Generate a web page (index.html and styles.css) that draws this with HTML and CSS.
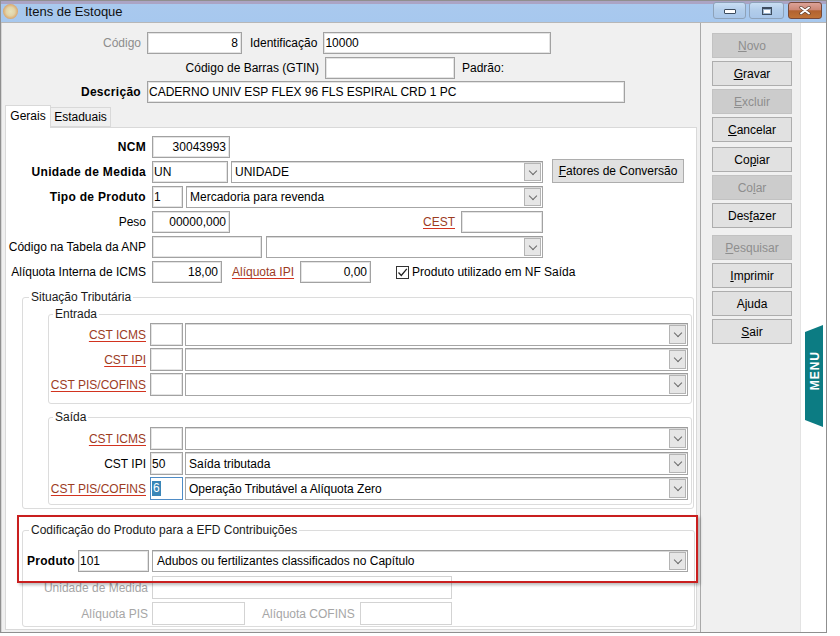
FILE: index.html
```html
<!DOCTYPE html>
<html lang="pt-BR">
<head>
<meta charset="utf-8">
<title>Itens de Estoque</title>
<link rel="stylesheet" href="styles.css">
</head>
<body>
<div class="window">
  <div class="titlebar">
    <span class="appicon"></span>
    <span class="title">Itens de Estoque</span>
    <div class="wbtns">
      <span class="wbtn wmin"><span class="gmin"></span></span>
      <span class="wbtn wmax"><span class="gmax"></span></span>
      <span class="wbtn wclose"><svg width="12" height="9" viewBox="0 0 12 9"><path d="M2 1.5 10 7.5M10 1.5 2 7.5" stroke="#5a3a2a" stroke-width="3.2" stroke-linecap="round"/><path d="M2 1.5 10 7.5M10 1.5 2 7.5" stroke="#fff" stroke-width="2" stroke-linecap="round"/></svg></span>
    </div>
  </div>
  <div class="client">
    <div class="main">
      <div class="toprow">
        <span class="lbl w138 r dis">Código</span>
        <div class="tb w95 r">8</div>
        <span class="lbl ml8">Identificação</span>
        <div class="tb w228">10000</div>
      </div>
      <div class="toprow row2">
        <span class="lbl w316 r">Código de Barras (GTIN)</span>
        <div class="tb w130"></div>
        <span class="lbl ml7">Padrão:</span>
      </div>
      <div class="toprow row3">
        <span class="lbl w138 r b">Descrição</span>
        <div class="tb w478">CADERNO UNIV ESP FLEX 96 FLS ESPIRAL CRD 1 PC</div>
      </div>
      <div class="tabs">
        <span class="tab active">Gerais</span>
        <span class="tab">Estaduais</span>
      </div>
      <div class="panel">
        <div class="frow">
          <span class="flabel b">NCM</span>
          <div class="tb w78 r">30043993</div>
        </div>
        <div class="frow">
          <span class="flabel b">Unidade de Medida</span>
          <div class="tb w76">UN</div>
          <div class="cb w312 ml3"><span class="cbtxt">UNIDADE</span><span class="cbbtn"></span></div>
          <div class="pbtn"><u>F</u>atores de Conversão</div>
        </div>
        <div class="frow">
          <span class="flabel b">Tipo de Produto</span>
          <div class="tb w31">1</div>
          <div class="cb w357 ml3"><span class="cbtxt">Mercadoria para revenda</span><span class="cbbtn"></span></div>
        </div>
        <div class="frow">
          <span class="flabel">Peso</span>
          <div class="tb w78 r">00000,000</div>
          <span class="cestlbl"><span class="lnk">CEST</span></span>
          <div class="tb w82"></div>
        </div>
        <div class="frow">
          <span class="flabel">Código na Tabela da ANP</span>
          <div class="tb w110"></div>
          <div class="cb w277 ml4"><span class="cbtxt"></span><span class="cbbtn"></span></div>
        </div>
        <div class="frow">
          <span class="flabel">Alíquota Interna de ICMS</span>
          <div class="tb w70 r">18,00</div>
          <span class="lnk ipilbl">Alíquota IPI</span>
          <div class="tb w71 r">0,00</div>
          <span class="chk"><svg width="11" height="11" viewBox="0 0 11 11"><path d="M1.5 5.5 4.3 8.5 9.8 1.8" fill="none" stroke="#222" stroke-width="1.3"/></svg></span>
          <span class="chklbl">Produto utilizado em NF Saída</span>
        </div>

        <fieldset class="grp sit">
          <legend>Situação Tributária</legend>
          <fieldset class="grp sub ent">
            <legend>Entrada</legend>
            <div class="crow">
              <span class="clabel"><span class="lnk">CST ICMS</span></span>
              <div class="tb w33"></div>
              <div class="cb fill ml2"><span class="cbtxt"></span><span class="cbbtn"></span></div>
            </div>
            <div class="crow">
              <span class="clabel"><span class="lnk">CST IPI</span></span>
              <div class="tb w33"></div>
              <div class="cb fill ml2"><span class="cbtxt"></span><span class="cbbtn"></span></div>
            </div>
            <div class="crow">
              <span class="clabel"><span class="lnk">CST PIS/COFINS</span></span>
              <div class="tb w33"></div>
              <div class="cb fill ml2"><span class="cbtxt"></span><span class="cbbtn"></span></div>
            </div>
          </fieldset>
          <fieldset class="grp sub sai">
            <legend>Saída</legend>
            <div class="crow">
              <span class="clabel"><span class="lnk">CST ICMS</span></span>
              <div class="tb w33"></div>
              <div class="cb fill ml2"><span class="cbtxt"></span><span class="cbbtn"></span></div>
            </div>
            <div class="crow">
              <span class="clabel">CST IPI</span>
              <div class="tb w33">50</div>
              <div class="cb fill ml2"><span class="cbtxt">Saída tributada</span><span class="cbbtn"></span></div>
            </div>
            <div class="crow">
              <span class="clabel"><span class="lnk">CST PIS/COFINS</span></span>
              <div class="tb w33 focus"><span class="sel">6</span></div>
              <div class="cb fill ml2"><span class="cbtxt">Operação Tributável a Alíquota Zero</span><span class="cbbtn"></span></div>
            </div>
          </fieldset>
        </fieldset>

        <fieldset class="grp efd">
          <legend>Codificação do Produto para a EFD Contribuições</legend>
          <div class="erow">
            <span class="plabel b">Produto</span>
            <div class="tb w71">101</div>
            <div class="cb fill ml3"><span class="cbtxt efdtxt">Adubos ou fertilizantes classificados no Capítulo</span><span class="cbbtn"></span></div>
          </div>
          <div class="erow dis-row">
            <span class="elabel">Unidade de Medida</span>
            <div class="tb off w300"></div>
          </div>
          <div class="erow dis-row">
            <span class="elabel">Alíquota PIS</span>
            <div class="tb off w93"></div>
            <span class="coflbl">Alíquota COFINS</span>
            <div class="tb off w92"></div>
          </div>
        </fieldset>
      </div>
    </div>
    <div class="sidebar">
      <div class="btnpanel">
        <div class="btn off"><u>N</u>ovo</div>
        <div class="btn"><u>G</u>ravar</div>
        <div class="btn off"><u>E</u>xcluir</div>
        <div class="btn"><u>C</u>ancelar</div>
        <div class="btn sep5">Co<u>p</u>iar</div>
        <div class="btn off">Co<u>l</u>ar</div>
        <div class="btn">Des<u>f</u>azer</div>
        <div class="btn off sep7"><u>P</u>esquisar</div>
        <div class="btn"><u>I</u>mprimir</div>
        <div class="btn">A<u>j</u>uda</div>
        <div class="btn"><u>S</u>air</div>
      </div>
      <div class="strip"></div>
    </div>
  </div>
  <div class="redmark"></div>
  <div class="menutab"><span>MENU</span></div>
</div>
</body>
</html>
```
FILE: styles.css
```css
* { box-sizing: border-box; }
body {
  margin: 0;
  background: #fff;
  font-family: "Liberation Sans", Arial, sans-serif;
  font-size: 12px;
  color: #000;
}
.window {
  position: relative;
  width: 827px;
  height: 633px;
  border: 1px solid #8f8f8f;
  background: #f0f0f0;
  display: flex;
  flex-direction: column;
}
/* title bar */
.titlebar {
  height: 22px;
  flex: none;
  display: flex;
  align-items: center;
  background: linear-gradient(#aba4c4 0, #aba4c4 3px, #a9c9ee 3px, #a7c8ee 100%);
  border-bottom: 1px solid #b7b7b7;
  padding: 0 4px 0 2px;
}
.appicon {
  width: 15px;
  height: 15px;
  border-radius: 50%;
  background: radial-gradient(circle, #e7e2bb 0, #e2d4a8 40%, #d9a46a 72%, #e6c9a0 100%);
}
.title {
  margin-left: 7px;
  font-size: 13px;
  color: #111;
}
.wbtns {
  margin-left: auto;
  align-self: flex-start;
  margin-top: 1px;
  display: flex;
  gap: 3px;
}
.wbtn {
  height: 17px;
  border: 1px solid #8ea2b9;
  border-radius: 3px;
  display: flex;
  align-items: center;
  justify-content: center;
  background: linear-gradient(#c9def3, #b2cdea 50%, #a9c6e8);
}
.wmin { width: 33px; }
.wmax { width: 35px; margin-right: 1px; }
.wclose {
  width: 34px;
  border-color: #76493a;
  background: linear-gradient(#dca297 0, #cc8877 45%, #b2622f 52%, #bf7236 100%);
}
.gmin {
  width: 12px;
  height: 5px;
  border: 1px solid #3d4c5e;
  border-radius: 1px;
  background: #fff;
  margin-top: 2px;
}
.gmax {
  width: 10px;
  height: 8px;
  border: 1px solid #3d4c5e;
  border-top-width: 2px;
  background: #fff;
  box-shadow: inset 0 0 0 1px #9fb6cf;
}
/* client */
.client {
  flex: 1;
  display: flex;
  min-height: 0;
}
.main {
  width: 699px;
  flex: none;
  padding: 9px 0 0 2px;
  box-shadow: inset 1px 0 0 #d6d6d6;
}
.sidebar {
  flex: 1;
  display: flex;
  border-left: 1px solid #a9a9a9;
}
.btnpanel {
  width: 100px;
  flex: none;
  padding: 10px 0 0 11px;
  background: #f0f0f0;
  border-right: 1px solid #e3e3e3;
  display: flex;
  flex-direction: column;
  gap: 3px;
}
.strip { flex: 1; background: #fff; }
.btn {
  width: 80px;
  height: 25px;
  border: 1px solid #adadad;
  background: #e1e1e1;
  display: flex;
  align-items: center;
  justify-content: center;
}
.btn.off {
  background: #cccccc;
  border-color: #c2c2c2;
  color: #8e8e8e;
}
.btn.sep5 { margin-top: 2px; }
.btn.sep7 { margin-top: 4px; }
/* generic */
.lbl { white-space: nowrap; margin-right: 6px; }
.r { text-align: right; justify-content: flex-end; }
.b { font-weight: bold; letter-spacing: .3px; }
.dis { color: #8d8d8d; }
.ml2 { margin-left: 2px; }
.ml3 { margin-left: 3px; }
.ml4 { margin-left: 4px; }
.ml7 { margin-left: 7px; }
.ml8 { margin-left: 8px; }
.w31 { width: 31px; }
.w33 { width: 33px; }
.w70 { width: 70px; }
.w71 { width: 71px; }
.w76 { width: 76px; }
.w78 { width: 78px; }
.w82 { width: 82px; }
.w92 { width: 92px; }
.w93 { width: 93px; }
.w95 { width: 95px; }
.w110 { width: 110px; }
.w130 { width: 130px; }
.w138 { width: 138px; }
.w228 { width: 228px; }
.w277 { width: 277px; }
.w300 { width: 300px; }
.w312 { width: 312px; }
.w316 { width: 316px; }
.w357 { width: 357px; }
.w478 { width: 478px; }
.fill { flex: 1; }

.tb {
  height: 100%;
  flex: none;
  display: flex;
  align-items: center;
  border: 1px solid #a2a2a2;
  box-shadow: inset 0 0 0 1px #e4e4e4;
  background: #fff;
  padding: 0 3px 0 1px;
  white-space: nowrap;
  overflow: hidden;
}
.tb.off {
  border-color: #d3d3d3;
  box-shadow: none;
}
.tb.focus {
  border-color: #4f8cc6;
  box-shadow: none;
}
.sel {
  background: #3a86b8;
  color: #fff;
  padding: 0 1px;
  line-height: 15px;
}
.cb {
  height: 100%;
  flex: none;
  display: flex;
  align-items: stretch;
  border: 1px solid #a6a6a6;
  border-top-color: #9c9c9c;
  box-shadow: inset 0 1px 0 #d9d9d9;
  background: #fff;
  padding: 1px;
}
.cb.fill { flex: 1; }
.cbtxt {
  flex: 1;
  display: flex;
  align-items: center;
  padding-left: 2px;
  white-space: nowrap;
  overflow: hidden;
}
.efdtxt { padding-left: 3px; }
.cbbtn {
  width: 17px;
  flex: none;
  border: 1px solid #b4b4b4;
  background: #e6e6e6;
  display: flex;
  align-items: center;
  justify-content: center;
}
.cbbtn::after {
  content: "";
  width: 5px;
  height: 5px;
  border-right: 1px solid #6a6a6a;
  border-bottom: 1px solid #6a6a6a;
  transform: rotate(45deg);
  margin-top: -3px;
}
.lnk {
  color: #9c3c1f;
  text-decoration: underline;
  text-decoration-color: #d2331f;
  text-underline-offset: 2px;
}

/* top rows */
.toprow {
  height: 22px;
  display: flex;
  align-items: center;
}
.row2 { margin-top: 3px; }
.row3 { margin-top: 2px; }

/* tabs */
.tabs {
  height: 22px;
  margin: 2px 0 0 2px;
  display: flex;
  align-items: flex-end;
  position: relative;
  z-index: 1;
}
.tab {
  height: 20px;
  width: 60px;
  border: 1px solid #d9d9d9;
  border-left: none;
  background: #f0f0f0;
  display: flex;
  align-items: center;
  justify-content: center;
}
.tab.active {
  width: 46px;
  height: 23px;
  margin-bottom: -1px;
  border-left: 1px solid #d9d9d9;
  border-bottom: none;
  background: #fff;
  padding-bottom: 3px;
}
.panel {
  width: 692px;
  height: 503px;
  margin-left: 2px;
  background: #fff;
  border: 1px solid #d9d9d9;
  padding-top: 8px;
}
.frow {
  height: 22px;
  display: flex;
  align-items: center;
}
.frow + .frow { margin-top: 3px; }
.flabel {
  width: 140px;
  flex: none;
  margin-right: 6px;
  text-align: right;
  white-space: nowrap;
}
.pbtn {
  align-self: flex-end;
  height: 24px;
  width: 132px;
  margin-left: 9px;
  border: 1px solid #adadad;
  background: #e1e1e1;
  display: flex;
  align-items: center;
  justify-content: center;
}
.cestlbl {
  width: 225px;
  margin-right: 6px;
  text-align: right;
}
.ipilbl {
  margin: 0 6px 0 10px;
  white-space: nowrap;
}
.chk {
  width: 13px;
  height: 13px;
  margin-left: 25px;
  border: 1px solid #333;
  background: #fff;
  display: flex;
  align-items: center;
  justify-content: center;
}
.chklbl { margin-left: 3px; white-space: nowrap; }

/* group boxes */
.grp {
  margin: 0;
  padding: 0;
  min-width: 0;
  border: 1px solid #dcdcdc;
  border-radius: 3px;
}
.grp legend {
  padding: 0 2px;
  margin-left: 6px;
  line-height: 14px;
  color: #1a1a1a;
}
.sub legend { margin-left: 4px; }
.sit { margin: 7px 2px 0 16px; padding-bottom: 3px; }
.ent { margin: 3px 1px 0 25px; padding: 2px 3px 7px 0; }
.sai { margin: 6px 1px 0 25px; padding: 3px 3px 4px 0; }
.crow {
  height: 23px;
  display: flex;
  align-items: center;
}
.crow + .crow { margin-top: 2px; }
.clabel {
  width: 97px;
  flex: none;
  margin-right: 4px;
  text-align: right;
  white-space: nowrap;
}
.efd { margin: 14px 1px 0 16px; padding: 13px 6px 1px 0; }
.erow {
  height: 22px;
  display: flex;
  align-items: center;
}
.erow.dis-row { height: 23px; color: #a6a6a6; }
.erow + .erow { margin-top: 4px; }
.erow + .erow + .erow { margin-top: 3px; }
.plabel {
  width: 52px;
  flex: none;
  margin-right: 3px;
  text-align: right;
}
.elabel {
  width: 125px;
  flex: none;
  margin-right: 4px;
  text-align: right;
  white-space: nowrap;
}
.coflbl {
  margin: 0 5px 0 17px;
  white-space: nowrap;
}

/* overlays */
.redmark {
  position: absolute;
  left: 16px;
  top: 514px;
  width: 681px;
  height: 68px;
  border: 2px solid #c91f1f;
  box-shadow: 2px 2px 3px rgba(0, 0, 0, .28);
  pointer-events: none;
}
.menutab {
  position: absolute;
  left: 804px;
  top: 324px;
  width: 18px;
  height: 102px;
  background: #0c7c83;
  clip-path: polygon(0 7px, 100% 0, 100% 100%, 0 calc(100% - 7px));
  display: flex;
  align-items: center;
  justify-content: center;
  padding: 0 0 10px 2px;
}
.menutab span {
  writing-mode: vertical-rl;
  transform: rotate(180deg);
  color: #fff;
  font-weight: bold;
  font-size: 12px;
  letter-spacing: 1px;
}
```
